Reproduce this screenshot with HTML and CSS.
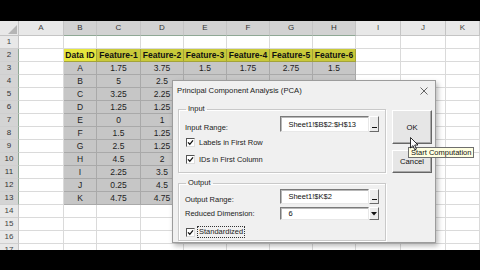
FILE: index.html
```html
<!DOCTYPE html>
<html>
<head>
<meta charset="utf-8">
<title>PCA</title>
<link rel="stylesheet" href="styles.css">
</head>
<body>
<div class="screen">
  <div class="bar"></div>
  <div class="sheet">
    <div class="row hdr">
      <span class="corner"><svg width="10" height="10" viewBox="0 0 10 10"><polygon points="10,1 10,10 1,10" fill="#b5b5b5"/></svg></span>
      <span>A</span><span class="sel">B</span><span class="sel">C</span><span class="sel">D</span><span class="sel">E</span><span class="sel">F</span><span class="sel">G</span><span class="sel">H</span><span>I</span><span>J</span><span>K</span>
    </div>
    <div class="row"><span class="rh">1</span><span></span><span></span><span></span><span></span><span></span><span></span><span></span><span></span><span></span><span></span><span></span></div>
    <div class="row"><span class="rh sel">2</span><span></span><span class="y act">Data ID</span><span class="y">Feature-1</span><span class="y">Feature-2</span><span class="y">Feature-3</span><span class="y">Feature-4</span><span class="y">Feature-5</span><span class="y">Feature-6</span><span></span><span></span><span></span></div>
    <div class="row"><span class="rh sel">3</span><span></span><span class="g">A</span><span class="g">1.75</span><span class="g">3.75</span><span class="g">1.5</span><span class="g">1.75</span><span class="g">2.75</span><span class="g">1.5</span><span></span><span></span><span></span></div>
    <div class="row"><span class="rh sel">4</span><span></span><span class="g">B</span><span class="g">5</span><span class="g">2.5</span><span class="g"></span><span class="g"></span><span class="g"></span><span class="g"></span><span></span><span></span><span></span></div>
    <div class="row"><span class="rh sel">5</span><span></span><span class="g">C</span><span class="g">3.25</span><span class="g">2.25</span><span class="g"></span><span class="g"></span><span class="g"></span><span class="g"></span><span></span><span></span><span></span></div>
    <div class="row"><span class="rh sel">6</span><span></span><span class="g">D</span><span class="g">1.25</span><span class="g">1.25</span><span class="g"></span><span class="g"></span><span class="g"></span><span class="g"></span><span></span><span></span><span></span></div>
    <div class="row"><span class="rh sel">7</span><span></span><span class="g">E</span><span class="g">0</span><span class="g">1</span><span class="g"></span><span class="g"></span><span class="g"></span><span class="g"></span><span></span><span></span><span></span></div>
    <div class="row"><span class="rh sel">8</span><span></span><span class="g">F</span><span class="g">1.5</span><span class="g">1.25</span><span class="g"></span><span class="g"></span><span class="g"></span><span class="g"></span><span></span><span></span><span></span></div>
    <div class="row"><span class="rh sel">9</span><span></span><span class="g">G</span><span class="g">2.5</span><span class="g">1.25</span><span class="g"></span><span class="g"></span><span class="g"></span><span class="g"></span><span></span><span></span><span></span></div>
    <div class="row"><span class="rh sel">10</span><span></span><span class="g">H</span><span class="g">4.5</span><span class="g">2</span><span class="g"></span><span class="g"></span><span class="g"></span><span class="g"></span><span></span><span></span><span></span></div>
    <div class="row"><span class="rh sel">11</span><span></span><span class="g">I</span><span class="g">2.25</span><span class="g">3.5</span><span class="g"></span><span class="g"></span><span class="g"></span><span class="g"></span><span></span><span></span><span></span></div>
    <div class="row"><span class="rh sel">12</span><span></span><span class="g">J</span><span class="g">0.25</span><span class="g">4.5</span><span class="g"></span><span class="g"></span><span class="g"></span><span class="g"></span><span></span><span></span><span></span></div>
    <div class="row"><span class="rh sel">13</span><span></span><span class="g">K</span><span class="g">4.75</span><span class="g">4.75</span><span class="g"></span><span class="g"></span><span class="g"></span><span class="g"></span><span></span><span></span><span></span></div>
    <div class="row"><span class="rh">14</span><span></span><span></span><span></span><span></span><span></span><span></span><span></span><span></span><span></span><span></span><span></span></div>
    <div class="row"><span class="rh">15</span><span></span><span></span><span></span><span></span><span></span><span></span><span></span><span></span><span></span><span></span><span></span></div>
    <div class="row"><span class="rh">16</span><span></span><span></span><span></span><span></span><span></span><span></span><span></span><span></span><span></span><span></span><span></span></div>
    <div class="row"><span class="rh">17</span><span></span><span></span><span></span><span></span><span></span><span></span><span></span><span></span><span></span><span></span><span></span></div>

    <div class="dialog">
      <div class="title">
        <span>Principal Component Analysis (PCA)</span>
        <svg class="close" width="8" height="8" viewBox="0 0 8 8"><path d="M0.5 0.5 L7.5 7.5 M7.5 0.5 L0.5 7.5" stroke="#555" stroke-width="0.9"/></svg>
      </div>
      <div class="dbody">
        <div class="groups">
          <fieldset class="grp in">
            <legend>Input</legend>
            <div class="frow first">
              <span class="lbl">Input Range:</span>
              <span class="tbox">Sheet1!$B$2:$H$13</span><span class="rbtn"><i></i></span>
            </div>
            <div class="chk c1">
              <span class="box"><svg width="7" height="7" viewBox="0 0 7 7"><path d="M1 3.4 L2.8 5.3 L6 1.3" fill="none" stroke="#111" stroke-width="1.3"/></svg></span>
              <span>Labels in First Row</span>
            </div>
            <div class="chk c2">
              <span class="box"><svg width="7" height="7" viewBox="0 0 7 7"><path d="M1 3.4 L2.8 5.3 L6 1.3" fill="none" stroke="#111" stroke-width="1.3"/></svg></span>
              <span>IDs in First Column</span>
            </div>
          </fieldset>
          <fieldset class="grp out">
            <legend>Output</legend>
            <div class="frow first2">
              <span class="lbl">Output Range:</span>
              <span class="tbox">Sheet1!$K$2</span><span class="rbtn"><i></i></span>
            </div>
            <div class="frow combo">
              <span class="lbl">Reduced Dimension:</span>
              <span class="tbox">6</span><span class="rbtn dd"><svg width="6" height="4" viewBox="0 0 6 4"><polygon points="0,0 6,0 3,3.5" fill="#111"/></svg></span>
            </div>
            <div class="chk c3">
              <span class="box"><svg width="7" height="7" viewBox="0 0 7 7"><path d="M1 3.4 L2.8 5.3 L6 1.3" fill="none" stroke="#111" stroke-width="1.3"/></svg></span>
              <span class="focus">Standardized</span>
            </div>
          </fieldset>
        </div>
        <div class="btns">
          <div class="btn ok">OK</div>
          <div class="btn cancel">Cancel</div>
        </div>
      </div>
    </div>

    <div class="tip">Start Computation</div>
    <svg class="cursor" width="9" height="14" viewBox="0 0 9 14"><path d="M0.5 0.5 L0.5 11 L3 8.6 L4.8 12.8 L6.4 12.1 L4.7 8 L8 8 Z" fill="#fff" stroke="#000" stroke-width="0.8" stroke-linejoin="round"/></svg>
  </div>
  <div class="bar bottom"></div>
</div>
</body>
</html>
```

FILE: styles.css
```css
* { box-sizing: border-box; }
body { margin: 0; background: #000; }
.screen { width: 480px; height: 270px; display: flex; flex-direction: column; overflow: hidden; }
.bar { height: 21px; flex: none; background: #000; }
.bar.bottom { height: 20px; }

.sheet {
  position: relative; height: 229px; flex: none; background: #fff; overflow: hidden;
  font-family: "Liberation Sans", Arial, sans-serif; font-size: 8.5px; color: #222;
}
.row {
  display: grid;
  grid-template-columns: 19px 45px 33px 44px 43px 43px 43px 43px 43px 45px 45px 34px;
  height: 13px;
}
.row > span {
  border-right: 1px solid #dadada; border-bottom: 1px solid #dadada;
  text-align: center; line-height: 12px; white-space: nowrap; overflow: hidden;
}
.hdr { height: 15px; }
.hdr > span {
  background: #e8e8e8; border-color: #c4c4c4; color: #444; font-size: 8px; line-height: 14px;
}
.hdr > span.sel { background: #d2d2d2; color: #333; border-bottom: 1px solid #8fa895; }
.hdr .corner { display: flex; align-items: flex-end; justify-content: flex-end; padding: 0 1px 1px 0; }
.row > .rh { background: #e8e8e8; border-right-color: #c4c4c4; border-bottom-color: #cfcfcf; color: #444; font-size: 8px; }
.row > .rh.sel { background: #d4d4d4; border-right: 1px solid #8fa895; color: #333; }
.row > .g { background: #c6c6c6; border-color: #a9a9a9; color: #1e1e1e; }
.row > .y { background: #c9c93a; border-color: #a3a33a; font-weight: bold; color: #111; }
.row > .y.act { background: #e6e63e; }

.dialog {
  position: absolute; left: 172px; top: 59px; width: 264px; height: 163px;
  background: #f0f0f0; border: 1px solid #9c9c9c;
  box-shadow: 2px 3px 5px rgba(0, 0, 0, 0.28);
  font-size: 7.5px; color: #111; display: flex; flex-direction: column;
}
.title {
  height: 19px; flex: none; display: flex; align-items: center; justify-content: space-between;
  padding: 0 7px 0 4px; font-size: 7.7px; color: #222;
}
.dbody { flex: 1; display: flex; gap: 6px; padding: 4px 3px 1px 5px; }
.groups { width: 208px; display: flex; flex-direction: column; gap: 5px; }
.grp {
  margin: 0; padding: 0 6px; min-width: 0;
  border: 1px solid #c9c9c9; box-shadow: inset 1px 1px 0 #fff, 1px 1px 0 #fff;
}
.grp.in { height: 69px; }
.grp.out { height: 63px; }
.grp legend { padding: 0 2px; margin-left: 1px; line-height: 10px; color: #222; }
.frow { display: flex; align-items: center; }
.frow.first { height: 16px; margin-top: 2px; }
.frow.first2 { height: 15px; margin-top: 1px; }
.frow.combo { height: 13px; margin-top: 3px; }
.lbl { width: 97px; align-self: flex-end; line-height: 9px; color: #222; }
.combo .lbl { align-self: center; }
.tbox {
  width: 90px; height: 100%; background: #fff; padding-left: 7px;
  border: 1px solid; border-color: #7a7a7a #e8e8e8 #e8e8e8 #7a7a7a;
  box-shadow: inset 1px 1px 0 #b8b8b8;
  display: flex; align-items: center; white-space: nowrap; overflow: hidden;
}
.rbtn {
  width: 10px; height: 100%; background: #ececec;
  border: 1px solid; border-color: #fff #6a6a6a #6a6a6a #fff;
  display: flex; align-items: flex-end; justify-content: center; padding-bottom: 3px;
}
.rbtn i { display: block; width: 5px; height: 1.5px; background: #111; }
.rbtn.dd { align-items: center; padding-bottom: 0; }
.chk { display: flex; align-items: center; height: 12px; padding-left: 1px; gap: 4px; color: #222; }
.chk.c1 { margin-top: 4px; }
.chk.c2 { margin-top: 5px; }
.chk.c3 { margin-top: 6px; }
.box {
  width: 9px; height: 9px; background: #fff; flex: none;
  border: 1px solid; border-color: #555 #ddd #ddd #555;
  display: flex; align-items: center; justify-content: center;
}
.focus { border: 1px dotted #333; padding: 0 1px; line-height: 10px; margin-left: -2px; }
.btns { width: 40px; display: flex; flex-direction: column; gap: 6px; padding-top: 6px; }
.btn {
  background: #e6e6e6; display: flex; align-items: center; justify-content: center;
  border: 1px solid; border-color: #fff #666 #666 #fff;
  box-shadow: inset -1px -1px 0 #a8a8a8; color: #111; font-size: 7.7px;
}
.btn.ok { height: 34px; }
.btn.cancel { height: 23px; }

.tip {
  position: absolute; left: 408px; top: 126px; width: 66px; height: 11px;
  background: #ffffe1; border: 1px solid #6e6e6e; font-size: 7.5px; line-height: 9px;
  padding-left: 2px; white-space: nowrap; color: #111;
}
.cursor { position: absolute; left: 410px; top: 116px; }
```
